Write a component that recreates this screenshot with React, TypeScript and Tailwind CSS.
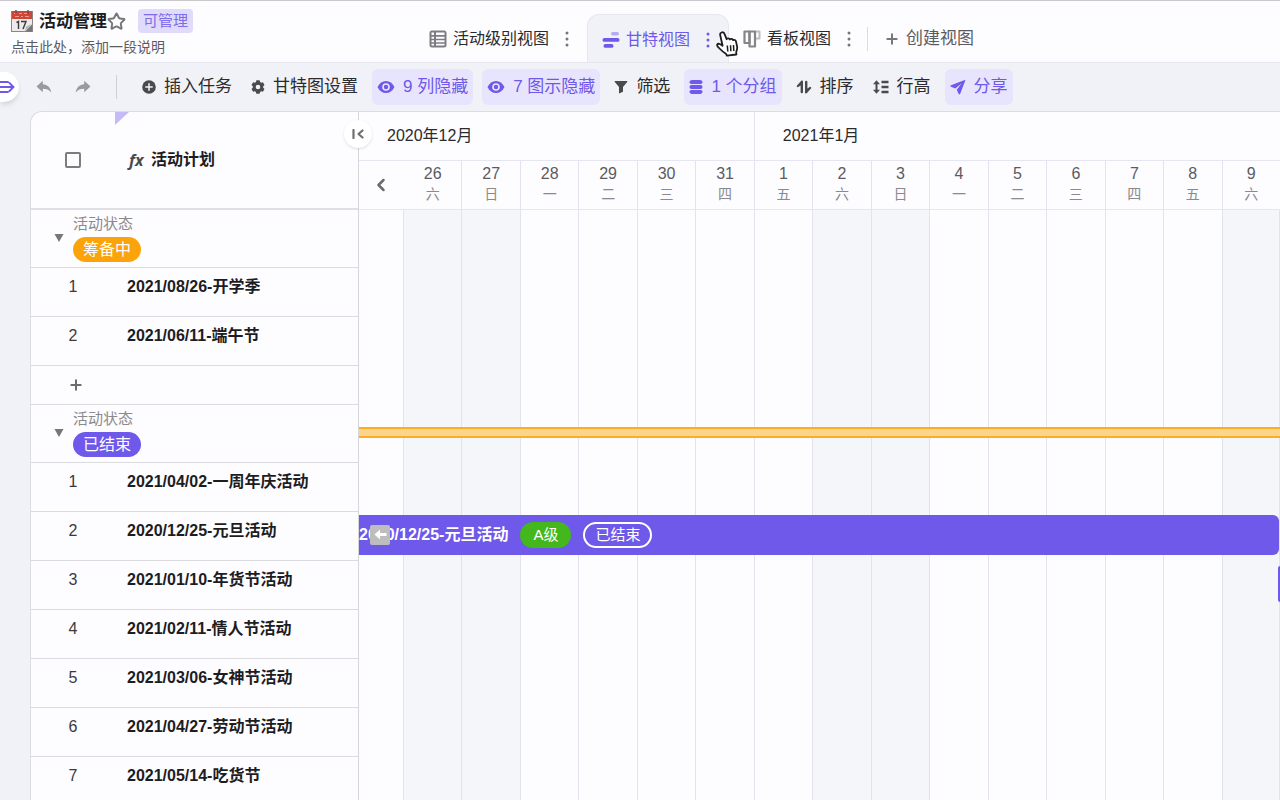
import React from 'react';
import { ChevronLeft, Plus, Star } from 'lucide-react';

interface Task {
  name: string;
}

interface Group {
  status: string;
  pill: string;
  tasks: Task[];
}

interface Day {
  date: number;
  week: string;
}

const GROUPS: Group[] = [
  {
    status: '筹备中',
    pill: 'bg-[#fba30a]',
    tasks: [{ name: '2021/08/26-开学季' }, { name: '2021/06/11-端午节' }],
  },
  {
    status: '已结束',
    pill: 'bg-[#6e59eb]',
    tasks: [
      { name: '2021/04/02-一周年庆活动' },
      { name: '2020/12/25-元旦活动' },
      { name: '2021/01/10-年货节活动' },
      { name: '2021/02/11-情人节活动' },
      { name: '2021/03/06-女神节活动' },
      { name: '2021/04/27-劳动节活动' },
      { name: '2021/05/14-吃货节' },
    ],
  },
];

const DAYS: Day[] = [
  { date: 26, week: '六' },
  { date: 27, week: '日' },
  { date: 28, week: '一' },
  { date: 29, week: '二' },
  { date: 30, week: '三' },
  { date: 31, week: '四' },
  { date: 1, week: '五' },
  { date: 2, week: '六' },
  { date: 3, week: '日' },
  { date: 4, week: '一' },
  { date: 5, week: '二' },
  { date: 6, week: '三' },
  { date: 7, week: '四' },
  { date: 8, week: '五' },
  { date: 9, week: '六' },
];

const TIMELINE_COLUMNS = 'grid grid-cols-[44px_repeat(15,minmax(0,1fr))]';

const isWeekend = (day: Day) => day.week === '六' || day.week === '日';

/* Icons */

const CalendarIcon = () => (
  <svg width="22" height="22" viewBox="0 0 22 22" aria-hidden="true">
    <rect x="0.5" y="1.5" width="21" height="20" fill="#eceaea" stroke="#8b8684" />
    <rect x="1" y="1" width="20" height="8" fill="#cf4638" />
    <path d="M3 3.5h3M8 3.5h3M13 3.5h3M4 6.5h4M10 6.5h2M14 6.5h4" stroke="#f09a8e" strokeWidth="1" />
    <path d="M5 0v4M17 0v4" stroke="#5e5a5a" strokeWidth="1.5" />
    <path d="M5.5 12.5l2-1V19M10 11.5h5L12 19" fill="none" stroke="#3b3b3b" strokeWidth="1.4" />
    <path d="M21 14.5L14 21.5h7z" fill="#77757a" />
    <path d="M21 14l-6 2.5-1 5z" fill="#b9b8bb" />
  </svg>
);

const SheetIcon = () => (
  <svg width="18" height="18" viewBox="0 0 18 18" aria-hidden="true">
    <rect x="0.5" y="0.5" width="17" height="17" rx="2.5" fill="#7d7d80" />
    <path
      d="M2.5 2.5h2.5v2.5H2.5zM2.5 6.7h2.5v2H2.5zM2.5 10.2h2.5v2H2.5zM2.5 13.7h2.5v1.9H2.5zM7 2.5h8.5v2.5H7zM7 6.7h8.5v2H7zM7 10.2h8.5v2H7zM7 13.7h8.5v1.9H7z"
      fill="#fdfcff"
    />
  </svg>
);

const GanttIcon = () => (
  <svg width="18" height="18" viewBox="0 0 18 18" aria-hidden="true">
    <rect x="9" y="1" width="8" height="3.6" rx="1.8" fill="#b5abf3" />
    <rect x="0.5" y="7" width="17" height="3.8" rx="1.9" fill="#6e59eb" />
    <rect x="1.5" y="13" width="10" height="3.8" rx="1.9" fill="#6e59eb" />
  </svg>
);

const KanbanIcon = () => (
  <svg width="18" height="18" viewBox="0 0 18 18" fill="none" aria-hidden="true">
    <path d="M12 1.500h4.500V8.500H12" stroke="#bdbdc0" strokeWidth="2" strokeLinejoin="round" />
    <path d="M1.500 1.500H6.500V13H1.500z" stroke="#858588" strokeWidth="2.200" strokeLinejoin="round" />
    <path d="M6.500 1.500H12V16.500H6.500z" stroke="#858588" strokeWidth="2.200" strokeLinejoin="round" />
  </svg>
);

const DotsIcon = ({ className }: { className: string }) => (
  <svg width="4" height="16" viewBox="0 0 4 16" fill="currentColor" className={className} aria-hidden="true">
    <circle cx="2" cy="2" r="1.5" />
    <circle cx="2" cy="8" r="1.5" />
    <circle cx="2" cy="14" r="1.5" />
  </svg>
);

const ExpandIcon = () => (
  <svg width="16" height="14" viewBox="0 0 16 14" fill="none" stroke="#6e59eb" strokeWidth="1.8" strokeLinecap="round" aria-hidden="true">
    <path d="M0 2h8M0 7h13M0 12h8M9.5 3l4 4-4 4" />
  </svg>
);

const UndoIcon = ({ className = '' }: { className?: string }) => (
  <svg width="16" height="14" viewBox="0 0 16 14" className={className} aria-hidden="true">
    <path d="M0.5 6.5L6.8 0.8V4.3C11.5 4.6 14.5 7.5 15.3 12.6C13 9.8 10.5 8.8 6.8 8.8V12.3z" fill="#9a9a9e" />
  </svg>
);

const AddCircleIcon = () => (
  <svg width="14" height="14" viewBox="0 0 14 14" aria-hidden="true">
    <circle cx="7" cy="7" r="6.8" fill="#4a4a4d" />
    <path d="M7 3.8v6.4M3.8 7h6.4" stroke="#f1f2f7" strokeWidth="1.5" strokeLinecap="round" />
  </svg>
);

const GearIcon = () => (
  <svg width="14" height="14" viewBox="0 0 14 14" aria-hidden="true">
    <path
      fillRule="evenodd"
      fill="#4a4a4d"
      d="M5.4 0.3h3.2l0.5 1.8 1 0.6 1.8-0.5 1.6 2.7-1.3 1.4v1.4l1.3 1.4-1.6 2.7-1.8-0.5-1 0.6-0.5 1.8H5.4l-0.5-1.8-1-0.6-1.8 0.5L0.5 9.1l1.3-1.4V6.3L0.5 4.9l1.6-2.7 1.8 0.5 1-0.6zM7 4.7a2.3 2.3 0 1 0 0 4.6a2.3 2.3 0 1 0 0-4.6z"
    />
  </svg>
);

const EyeIcon = () => (
  <svg width="18" height="14" viewBox="0 0 18 14" aria-hidden="true">
    <path d="M0.5 7C2.5 3 5.5 1 9 1s6.5 2 8.5 6c-2 4-5 6-8.5 6S2.5 11 0.5 7z" fill="#6e59eb" />
    <circle cx="9" cy="7" r="3.8" fill="#e9e5fd" />
    <circle cx="9" cy="7" r="2.2" fill="#6e59eb" />
  </svg>
);

const FilterIcon = () => (
  <svg width="14" height="14" viewBox="0 0 14 14" aria-hidden="true">
    <path d="M1.3 1h11.4c0.6 0 0.8 0.6 0.5 1L9 7v4.8l-4 1.7V7L0.8 2c-0.3-0.4-0.1-1 0.5-1z" fill="#4a4a4d" />
  </svg>
);

const GroupIcon = () => (
  <svg width="14" height="14" viewBox="0 0 14 14" fill="#6e59eb" aria-hidden="true">
    <path d="M3 0h8c1.5 0 2.5 1 2.5 2.2S12.5 4 11 4H3C1.5 4 0.5 3.4 0.5 2.2S1.5 0 3 0z" />
    <rect x="0.5" y="5" width="13" height="4" rx="2" />
    <path d="M3 10h8c1.5 0 2.5 0.6 2.5 1.8S12.5 14 11 14H3c-1.5 0-2.5-1-2.5-2.2S1.500 10 3 10z" />
  </svg>
);

const SortIcon = () => (
  <svg width="16" height="14" viewBox="0 0 16 14" aria-hidden="true">
    <path
      d="M7 1.600V12a1.200 1.200 0 0 1-2.400 0V5.500L2.300 7A1 1 0 0 1 1 5.500L5 1c0.700-0.800 2-0.400 2 0.600zM9 12.400V2a1.200 1.200 0 0 1 2.400 0v6.500L13.700 7A1 1 0 0 1 15 8.500L11 13c-0.700 0.800-2 0.400-2-0.600z"
      fill="#4a4a4d"
    />
  </svg>
);

const RowHeightIcon = () => (
  <svg width="16" height="14" viewBox="0 0 16 14" aria-hidden="true">
    <path d="M3.5 0.3L7 4.2H4.5v5.6H7L3.5 13.7L0 9.8h2.5V4.2H0z" fill="#4a4a4d" />
    <path d="M8.5 2H15.5M8.5 7H15.5M8.5 12H15.5" stroke="#4a4a4d" strokeWidth="2.4" />
  </svg>
);

const ShareIcon = () => (
  <svg width="16" height="16" viewBox="0 0 16 16" aria-hidden="true">
    <path d="M14.8 0.900L1 6.200c-0.700 0.300-0.700 1.200 0 1.500l4.300 1.700L11.500 4.500L6.800 10.700l1.900 4.200c0.300 0.700 1.200 0.600 1.500-0.100L15.300 1.500c0.100-0.400-0.100-0.700-0.500-0.600z" fill="#6e59eb" />
  </svg>
);

const CollapseIcon = () => (
  <svg width="12" height="10" viewBox="0 0 12 10" fill="none" stroke="#6f6f73" strokeWidth="2.2" strokeLinecap="round" strokeLinejoin="round" aria-hidden="true">
    <path d="M1.5 1v8M10.5 1.5L6.5 5l4 3.5" />
  </svg>
);

const HandCursor = () => (
  <svg width="24" height="26" viewBox="0 0 24 26" aria-hidden="true">
    <path
      d="M5.5 1.5c1.5-0.7 2.6 0.2 3.1 1.6l2 5.1c0.4-1 2.7-1.2 3.3 0.3c0.8-1 2.7-0.9 3.2 0.6c1.2-0.6 2.5 0 2.9 1.5l1.1 4.8c0.4 2-0.2 3.8-0.9 5.600l0.200 2.500l-9.500 1.200l-1-2c-2-1.200-4.500-3.200-6.900-5.700c-1.300-1.400-2.500-2.200-1.700-3.600c0.800-1.100 2.600-0.700 4 0.400l1.300 1L4.300 4.500c-0.400-1.300 0-2.500 1.200-3z"
      fill="#fff"
      stroke="#1d1d1f"
      strokeWidth="1.8"
      strokeLinejoin="round"
    />
    <path d="M11.3 14.5l0.5 6M14.5 14.2l0.4 6M17.500 14l0.300 6" stroke="#1d1d1f" strokeWidth="1.500" />
  </svg>
);

/* Header */

const Header: React.FC = () => (
  <header className="flex h-[62px] shrink-0 border-t border-[#c9c8cc] bg-[#fdfcff]">
    <div className="w-[418px] shrink-0 pt-2 pl-[11px]">
      <div className="flex h-6 items-center">
        <CalendarIcon />
        <h1 className="mt-0.5 ml-1.5 text-[17px] font-bold text-[#1d1d1f]">活动管理</h1>
        <button aria-label="收藏">
          <Star size={19} strokeWidth={2.5} className="text-[#77777a]" />
        </button>
        <span className="ml-3 rounded-sm bg-[#e0dbfa] px-[5px] text-[15px] leading-6 text-[#7e6cec]">可管理</span>
      </div>
      <p className="mt-1 text-sm leading-5 text-[#5b5b5f]">点击此处，添加一段说明</p>
    </div>
    <nav className="flex items-end">
      <div className="flex h-12 w-[169px] items-center pt-0.5 pl-[11px]">
        <button className="flex items-center gap-1.5 text-base text-[#2b2b2e]">
          <SheetIcon />
          活动级别视图
        </button>
        <button aria-label="更多" className="ml-4">
          <DotsIcon className="text-[#77777a]" />
        </button>
      </div>
      <div className="relative flex h-12 w-[142px] items-center rounded-t-xl border border-b-0 border-[#e6e7ee] bg-[#f1f2f7] pt-0.5 pl-3.5">
        <button className="flex items-center gap-1.5 text-base text-[#6e59eb]">
          <GanttIcon />
          甘特视图
        </button>
        <button aria-label="更多" className="ml-4">
          <DotsIcon className="text-[#6e59eb]" />
        </button>
        <div className="absolute top-4 left-32 z-10">
          <HandCursor />
        </div>
      </div>
      <div className="flex h-12 items-center pt-0.5 pl-3.5">
        <button className="flex items-center gap-1.5 text-base text-[#2b2b2e]">
          <KanbanIcon />
          看板视图
        </button>
        <button aria-label="更多" className="ml-4">
          <DotsIcon className="text-[#77777a]" />
        </button>
        <div className="mx-4 h-6 w-px bg-[#dcdde3]" />
        <button className="flex items-center gap-1.5 text-[17px] text-[#5b5b5f]">
          <Plus size={16} strokeWidth={3} className="text-[#77777a]" />
          创建视图
        </button>
      </div>
    </nav>
  </header>
);

/* Toolbar */

interface ToolButtonProps {
  icon: React.ReactNode;
  label: string;
  active?: boolean;
}

const ToolButton: React.FC<ToolButtonProps> = ({ icon, label, active = false }) => (
  <button
    className={`flex h-9 shrink-0 items-center gap-2 rounded-md px-[5px] text-[17px] ${
      active ? 'bg-[#e8e4fd] text-[#6e59eb]' : 'text-[#2b2b2e]'
    }`}
  >
    {icon}
    {label}
  </button>
);

const Toolbar: React.FC = () => (
  <div className="flex h-[49px] shrink-0 items-center border-t border-[#e6e7ee]">
    <button
      aria-label="展开侧栏"
      className="flex h-[30px] w-[19px] shrink-0 items-center rounded-r-full bg-white shadow-md"
    >
      <ExpandIcon />
    </button>
    <button aria-label="撤销" className="ml-[17px]">
      <UndoIcon />
    </button>
    <button aria-label="重做" className="ml-[23px]">
      <UndoIcon className="-scale-x-100" />
    </button>
    <div className="mr-5 ml-[25px] h-6 w-px bg-[#cfd0d6]" />
    <div className="flex items-center gap-[9px]">
      <ToolButton icon={<AddCircleIcon />} label="插入任务" />
      <ToolButton icon={<GearIcon />} label="甘特图设置" />
      <ToolButton icon={<EyeIcon />} label="9 列隐藏" active />
      <ToolButton icon={<EyeIcon />} label="7 图示隐藏" active />
      <ToolButton icon={<FilterIcon />} label="筛选" />
      <ToolButton icon={<GroupIcon />} label="1 个分组" active />
      <ToolButton icon={<SortIcon />} label="排序" />
      <ToolButton icon={<RowHeightIcon />} label="行高" />
      <ToolButton icon={<ShareIcon />} label="分享" active />
    </div>
  </div>
);

/* Task list */

const GroupRows: React.FC<{ group: Group; canAdd: boolean }> = ({ group, canAdd }) => (
  <tbody>
    <tr className="h-[58px] border-b border-[#dcdce0]">
      <td colSpan={2} className="p-0 align-top">
        <div className="flex">
          <button aria-label="折叠分组" className="ml-[23px] h-14 w-[19px]">
            <svg width="10" height="8" viewBox="0 0 10 8" aria-hidden="true">
              <path d="M0.5 0h9L5 8z" fill="#77777a" />
            </svg>
          </button>
          <div>
            <p className="text-[15px] leading-[27px] text-[#8a8a8e]">活动状态</p>
            <span className={`inline-block rounded-full px-2.5 text-base leading-[25px] text-white ${group.pill}`}>
              {group.status}
            </span>
          </div>
        </div>
      </td>
    </tr>
    {group.tasks.map((task, idx) => (
      <tr key={task.name} className="h-[49px] border-b border-[#dcdce0]">
        <td className="p-0 pb-2.5 text-center text-base text-[#3a3a3d]">{idx + 1}</td>
        <td className="p-0 pb-2.5 pl-3 text-base font-bold text-[#1d1d1f]">{task.name}</td>
      </tr>
    ))}
    {canAdd && (
      <tr className="h-[39px] border-b border-[#dcdce0]">
        <td colSpan={2} className="p-0">
          <button aria-label="添加任务" className="ml-[37px] block">
            <Plus size={16} strokeWidth={3} className="text-[#6b6b6f]" />
          </button>
        </td>
      </tr>
    )}
  </tbody>
);

const TaskList: React.FC = () => (
  <div className="relative z-10 w-[328px] shrink-0 border-r border-[#d6d6db]">
    <table className="w-full table-fixed border-collapse">
      <thead>
        <tr className="h-[97px] border-b-2 border-[#e0e0e4]">
          <th className="w-[84px] p-0 align-middle">
            <input
              type="checkbox"
              aria-label="全选"
              className="mx-auto block size-4 appearance-none rounded-xs border-2 border-[#7d7d80]"
            />
          </th>
          <th className="relative p-0 text-left">
            <svg width="14" height="13" viewBox="0 0 14 13" className="absolute top-0 left-0" aria-hidden="true">
              <path d="M0 0h14L0 13z" fill="#c4bcf8" />
            </svg>
            <div className="flex items-center pl-3.5 text-base font-bold text-[#1d1d1f]">
              <i className="w-[22px] font-['Noto_Sans',sans-serif] text-base leading-6 text-[#4a4a4d]">fx</i>
              活动计划
            </div>
          </th>
        </tr>
      </thead>
      {GROUPS.map((group, idx) => (
        <GroupRows key={group.status} group={group} canAdd={idx === 0} />
      ))}
    </table>
    <button
      aria-label="收起列表"
      className="absolute top-2 -right-3.5 flex size-7 items-center justify-center rounded-full bg-white shadow"
    >
      <CollapseIcon />
    </button>
  </div>
);

/* Timeline */

const Timeline: React.FC = () => (
  <div className="flex min-w-0 grow flex-col overflow-hidden">
    <div className={`${TIMELINE_COLUMNS} h-[49px] shrink-0 items-center border-b border-[#e6e6f2] text-base text-[#2b2b2e]`}>
      <div className="col-span-7 pl-7">2020年12月</div>
      <div className="col-span-9 flex h-full items-center border-l border-[#e3e3ec] pl-7">2021年1月</div>
    </div>
    <div className={`${TIMELINE_COLUMNS} h-[49px] shrink-0 border-b border-[#e6e6f2]`}>
      <button aria-label="向前" className="flex items-center justify-center">
        <ChevronLeft size={20} strokeWidth={3} className="text-[#6b6b6f]" />
      </button>
      {DAYS.map((day) => (
        <div
          key={day.date}
          className="border-l border-[#e3e3f0] pt-[3px] text-center text-[#5b5b5f] first-of-type:border-transparent"
        >
          <div className="text-base leading-5">{day.date}</div>
          <div className="text-sm leading-5 text-[#8a8a8e]">{day.week}</div>
        </div>
      ))}
    </div>
    <div className="relative grow">
      <div className={`${TIMELINE_COLUMNS} absolute inset-0`}>
        <div />
        {DAYS.map((day) => (
          <div
            key={day.date}
            className={`border-l border-[#e3e3ec] last:border-r ${isWeekend(day) ? 'bg-[#f4f6fa]' : ''}`}
          />
        ))}
      </div>
      <div className="relative pt-[193px]">
        <div className="flex h-[58px] items-center">
          <div className="h-[11px] w-full border-y-2 border-[#fbaf1c] bg-[#fdd48d]" />
        </div>
        <div className="h-[49px]" />
        <div className="flex h-[49px] items-center pr-px">
          <div className="relative flex h-10 w-full items-center gap-3 rounded-r-md bg-[#6e59eb] text-white">
            <span className="text-base font-bold">2020/12/25-元旦活动</span>
            <span className="rounded-full bg-[#43b71b] px-[13px] text-[15px] leading-[26px]">A级</span>
            <span className="rounded-full border-2 border-white px-2.5 text-[15px] leading-[22px]">已结束</span>
            <button
              aria-label="跳到开始"
              className="absolute left-[11px] flex size-5 items-center justify-center rounded-xs bg-[#bdbdbd]"
            >
              <svg width="13" height="11" viewBox="0 0 13 11" aria-hidden="true">
                <path d="M0.5 5.5L6 0.5v3.5h6.5v3H6v3.5z" fill="#fff" />
              </svg>
            </button>
          </div>
        </div>
        <div className="flex h-[49px] items-center justify-end">
          <div className="h-9 w-0.5 rounded-l bg-[#6e59eb]" />
        </div>
      </div>
    </div>
  </div>
);

export default function App() {
  return (
    <div className="flex h-screen flex-col overflow-hidden bg-[#f1f2f7] font-['Liberation_Sans','Noto_Sans_CJK_SC',sans-serif]">
      <Header />
      <Toolbar />
      <main className="ml-[30px] flex min-h-0 grow overflow-hidden rounded-tl-xl border-t border-l border-[#dcdce0] bg-[#fdfcff]">
        <TaskList />
        <Timeline />
      </main>
    </div>
  );
}
